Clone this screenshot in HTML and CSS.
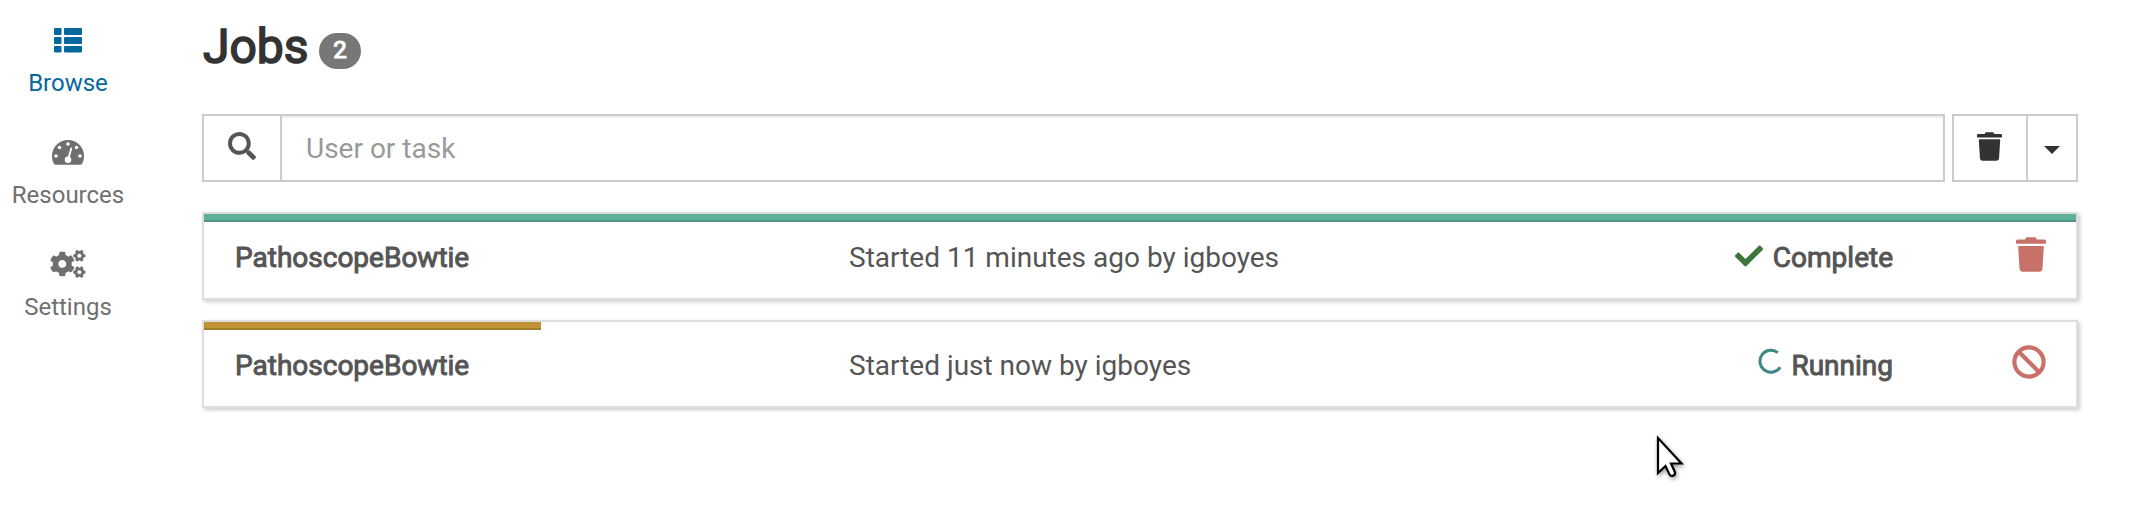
FILE: index.html
```html
<!DOCTYPE html>
<html lang="en">
<head>
<meta charset="utf-8">
<title>Jobs</title>
<link rel="stylesheet" href="styles.css">
</head>
<body>
<svg class="defs" width="0" height="0" aria-hidden="true">
  <symbol id="trash" viewBox="0 0 448 512">
    <path d="M0 84V56c0-13.300 10.700-24 24-24h112l9.400-18.700c4-8.200 12.300-13.300 21.400-13.300h114.300c9.100 0 17.400 5.100 21.500 13.300L312 32h112c13.300 0 24 10.700 24 24v28c0 6.600-5.400 12-12 12H12C5.400 96 0 90.600 0 84z"/>
    <path d="M44 128h360c7 0 12 5 12 12l-21 327c-2 26-21 45-48 45H101c-27 0-46-19-48-45L32 140c0-7 5-12 12-12z"/>
  </symbol>
  <symbol id="cog-small" viewBox="0 0 640 512">
    <path id="cog-small-path" d="M512.1 191l-8.200 14.300c-3 5.300-9.400 7.500-15.100 5.400-11.800-4.400-22.600-10.700-32.100-18.600-4.600-3.800-5.800-10.500-2.800-15.700l8.200-14.300c-6.900-8-12.300-17.300-15.900-27.400h-16.500c-6 0-11.200-4.300-12.200-10.300-2-12-2.100-24.600 0-37.100 1-6 6.200-10.400 12.200-10.400h16.500c3.600-10.100 9-19.400 15.900-27.400l-8.200-14.300c-3-5.200-1.900-11.900 2.800-15.700 9.500-7.900 20.400-14.200 32.100-18.600 5.700-2.100 12.100.1 15.100 5.400l8.200 14.300c10.500-1.900 21.200-1.900 31.700 0L552 6.300c3-5.300 9.400-7.500 15.100-5.400 11.800 4.400 22.600 10.700 32.100 18.600 4.600 3.800 5.800 10.500 2.800 15.700l-8.200 14.300c6.900 8 12.300 17.300 15.900 27.400h16.500c6 0 11.200 4.300 12.200 10.300 2 12 2.100 24.600 0 37.100-1 6-6.200 10.400-12.200 10.400h-16.500c-3.600 10.100-9 19.400-15.900 27.400l8.200 14.300c3 5.200 1.900 11.900-2.800 15.700-9.500 7.900-20.400 14.200-32.100 18.600-5.700 2.100-12.100-.1-15.100-5.400l-8.200-14.300c-10.400 1.900-21.200 1.900-31.700 0zm-10.500-58.800c38.500 29.600 82.400-14.300 52.800-52.800-38.500-29.700-82.400 14.300-52.800 52.800z"/>
  </symbol>
</svg>
<div class="page">
  <nav class="sidebar">
    <a class="nav-item active">
      <svg class="nav-icon" viewBox="0 0 36 28"><path d="M5 2h5.500q1 0 1 1v5q0 1-1 1H5q-1 0-1-1V3q0-1 1-1zM15 2h16q1 0 1 1v5q0 1-1 1H15q-1 0-1-1V3q0-1 1-1zM5 11h5.500q1 0 1 1v5q0 1-1 1H5q-1 0-1-1v-5q0-1 1-1zM15 11h16q1 0 1 1v5q0 1-1 1H15q-1 0-1-1v-5q0-1 1-1zM5 20h5.500q1 0 1 1v4.500q0 1-1 1H5q-1 0-1-1V21q0-1 1-1zM15 20h16q1 0 1 1v4.500q0 1-1 1H15q-1 0-1-1V21q0-1 1-1z"/></svg>
      <span>Browse</span>
    </a>
    <a class="nav-item">
      <svg class="nav-icon" viewBox="0 0 36 28">
        <path d="M18 2C9 2 2 9 2 18c0 3 .7 5.600 2 7.800.4.600.9 1 1.700 1h24.600c.8 0 1.300-.4 1.700-1 1.300-2.200 2-4.800 2-7.800C34 9 27 2 18 2z"/>
        <g fill="#fff"><circle cx="18" cy="6" r="1.800"/><circle cx="9.500" cy="9.500" r="1.800"/><circle cx="26.500" cy="9.500" r="1.800"/><circle cx="6" cy="18" r="1.800"/><circle cx="30" cy="18" r="1.800"/><circle cx="18" cy="21.800" r="3.300"/></g>
        <path d="M18.300 21L21.200 10.500" fill="none" stroke="#fff" stroke-width="1.900" stroke-linecap="round"/>
      </svg>
      <span>Resources</span>
    </a>
    <a class="nav-item">
      <svg class="nav-icon" viewBox="0 0 640 512">
        <use href="#cog-small-path"/>
        <use href="#cog-small-path" y="298.600"/>
        <path d="M386.300 286.100l33.700 16.800c10.100 5.800 14.500 18.100 10.500 29.100-8.900 24.200-26.400 46.400-42.600 65.800-7.400 8.900-20.200 11.100-30.300 5.300l-29.100-16.800c-16 13.700-34.600 24.600-54.900 31.700v33.600c0 11.600-8.300 21.600-19.700 23.600-24.600 4.200-50.400 4.400-75.900 0-11.500-2-20-11.900-20-23.600V418c-20.300-7.200-38.900-18-54.900-31.700L74 403c-10 5.800-22.900 3.600-30.300-5.300-16.200-19.400-33.300-41.600-42.200-65.700-4-10.900.4-23.200 10.500-29.100l33.300-16.800c-3.900-20.900-3.900-42.400 0-63.400L12 205.800c-10.100-5.800-14.600-18.100-10.500-29 8.900-24.200 26-46.400 42.200-65.800 7.400-8.900 20.200-11.100 30.300-5.300l29.100 16.800c16-13.700 34.600-24.600 54.900-31.700V57.100c0-11.500 8.200-21.500 19.600-23.500 24.600-4.200 50.500-4.400 76-.1 11.500 2 20 11.900 20 23.600v33.600c20.300 7.200 38.900 18 54.900 31.700l29.100-16.800c10-5.800 22.900-3.600 30.300 5.300 16.200 19.400 33.200 41.600 42.100 65.800 4 10.900.1 23.200-10 29.100l-33.700 16.800c3.900 21 3.900 42.500 0 63.500zm-117.600 21.100c59.200-77-28.700-164.900-105.700-105.700-59.200 77 28.700 164.900 105.700 105.700z"/>
      </svg>
      <span>Settings</span>
    </a>
  </nav>
  <main class="main">
    <header class="heading">
      <h1 class="title">Jobs</h1>
      <span class="badge">2</span>
    </header>
    <div class="toolbar">
      <div class="search">
        <span class="addon"><svg class="search-icon" viewBox="0 0 512 512"><path fill-rule="evenodd" d="M505 442.700L405.300 343c-4.500-4.500-10.600-7-17-7H372c27.600-35.300 44-79.700 44-128C416 93.100 322.900 0 208 0S0 93.100 0 208s93.100 208 208 208c48.300 0 92.700-16.400 128-44v16.300c0 6.400 2.500 12.500 7 17l99.700 99.700c9.400 9.400 24.600 9.400 33.900 0l28.300-28.300c9.400-9.400 9.400-24.600.1-34zM208 344a136 136 0 1 1 0-272 136 136 0 0 1 0 272z"/></svg></span>
        <input class="input" type="text" placeholder="User or task">
      </div>
      <div class="buttons">
        <button class="btn btn-clear"><svg class="trash-icon"><use href="#trash"/></svg></button>
        <button class="btn btn-caret"><span class="caret"></span></button>
      </div>
    </div>
    <section class="jobs">
      <article class="job">
        <div class="progress"><div class="bar success" style="width:100%"></div></div>
        <div class="row">
          <strong class="name">PathoscopeBowtie</strong>
          <span>Started 11 minutes ago by igboyes</span>
          <strong class="status"><svg class="check" viewBox="0 0 512 512"><path d="M173.898 439.404l-166.400-166.400c-9.997-9.997-9.997-26.206 0-36.204l36.203-36.204c9.997-9.998 26.207-9.998 36.204 0L192 312.690 432.095 72.596c9.997-9.997 26.207-9.997 36.204 0l36.203 36.204c9.997 9.997 9.997 26.206 0 36.204l-294.400 294.401c-9.998 9.997-26.207 9.997-36.204-.001z"/></svg><span>Complete</span></strong>
          <svg class="action remove"><use href="#trash"/></svg>
        </div>
      </article>
      <article class="job">
        <div class="progress"><div class="bar warning" style="width:18%"></div></div>
        <div class="row">
          <strong class="name">PathoscopeBowtie</strong>
          <span>Started just now by igboyes</span>
          <strong class="status"><svg class="spinner" viewBox="0 0 26 26"><path d="M19.800 4.600A11 11 0 1 0 22.200 19.200"/></svg><span>Running</span></strong>
          <svg class="action cancel" viewBox="0 0 34 34"><circle cx="17" cy="17" r="14.600"/><path d="M7 7l20 20"/></svg>
        </div>
      </article>
    </section>
  </main>
</div>
<svg class="cursor" viewBox="0 0 32 44"><path d="M2 2v35l7.500-7 4 8.500q1.500 2.200 4 1 2.200-1.200 1.400-3.500L15 27.500h10.500z"/></svg>
</body>
</html>
```
FILE: styles.css
```css
* { box-sizing: border-box; }
body {
  margin: 0;
  background: #fff;
  color: #555;
  font: 28px/40px Roboto, "Liberation Sans", sans-serif;
}
svg { display: block; fill: currentColor; }
.defs { position: absolute; }
.page { display: flex; height: 508px; overflow: hidden; }

.sidebar {
  width: 136px;
  margin-right: 66px;
  padding-top: 26px;
  display: flex;
  flex-direction: column;
  gap: 38px;
  color: #6f6f6f;
  font-size: 24px;
  line-height: 34px;
}
.nav-item { display: flex; flex-direction: column; align-items: center; gap: 12px; height: 74px; }
.nav-icon { width: 36px; height: 28px; }
.active { color: #07689d; }

.main { width: 1876px; }
.heading { display: flex; padding-top: 20px; height: 114px; }
.title {
  margin: 0 0 0 1px;
  color: #333;
  font-size: 48px;
  font-weight: 400;
  line-height: 54px;
  -webkit-text-stroke: 1.6px;
}
.badge {
  width: 42px;
  height: 36px;
  margin: 13px 0 0 10px;
  padding-left: 1px;
  border-radius: 18px;
  background: #777;
  color: #fff;
  font-size: 24px;
  line-height: 35px;
  text-align: center;
  -webkit-text-stroke: 1.1px;
}

.toolbar { display: flex; gap: 7px; height: 68px; }
.search { display: flex; flex: 1; border: 2px solid #ccc; }
.addon {
  display: flex;
  justify-content: center;
  width: 78px;
  padding-top: 16px;
  border-right: 2px solid #ccc;
}
.search-icon { width: 28px; height: 28px; }
.input {
  flex: 1;
  border: 0;
  outline: 0;
  padding: 2px 24px 0;
  background: none;
  font: inherit;
  box-shadow: inset 0 2px 2px rgba(0, 0, 0, .075);
}
.input::placeholder { color: #999; opacity: 1; }
.buttons { display: flex; width: 126px; border: 2px solid #ccc; }
.btn {
  display: flex;
  justify-content: center;
  margin: 0;
  padding: 0;
  border: 0;
  background: #fff;
  color: #333;
}
.btn-clear { width: 74px; padding: 16px 1px 0 0; border-right: 2px solid #ccc; }
.btn-caret { flex: 1; align-items: center; padding-top: 4px; }
.trash-icon { width: 25px; height: 29px; }
.caret { border: 8px solid transparent; border-top-color: #333; border-bottom: 0; }

.jobs { display: flex; flex-direction: column; gap: 20px; padding-top: 30px; }
.job {
  height: 88px;
  border: 2px solid #ddd;
  box-shadow: 2px 2px 4px rgba(0, 0, 0, .2);
}
.progress { height: 8px; }
.bar { height: 8px; border-bottom: 2px solid; }
.success { background: #60af98; border-color: #519581; }
.warning { background: #bf9235; border-color: #a27c2d; }
.row {
  display: grid;
  grid-template-columns: 614px 700px 344px 1fr;
  padding: 16px 30px 0 31px;
}
.row strong { font-weight: 400; -webkit-text-stroke: .95px; }
.status { display: flex; justify-content: flex-end; }
.check { width: 28px; height: 28px; margin: 4px 10px 0 0; color: #3c763d; }
.spinner { width: 26px; height: 26px; margin: 2px 7px 0 0; fill: none; stroke: #3d8785; stroke-width: 3; }
.action { justify-self: end; color: #c87168; }
.remove { width: 30px; height: 35px; margin-top: -1px; }
.cancel { width: 34px; height: 34px; margin-top: -1px; fill: none; stroke: currentColor; stroke-width: 4.2; }

.cursor {
  position: absolute;
  left: 1656px;
  top: 436px;
  width: 32px;
  height: 44px;
  overflow: visible;
  fill: #fff;
  stroke: #000;
  stroke-width: 2.2;
  filter: drop-shadow(1px 2px 2px rgba(0, 0, 0, .4));
}
```
